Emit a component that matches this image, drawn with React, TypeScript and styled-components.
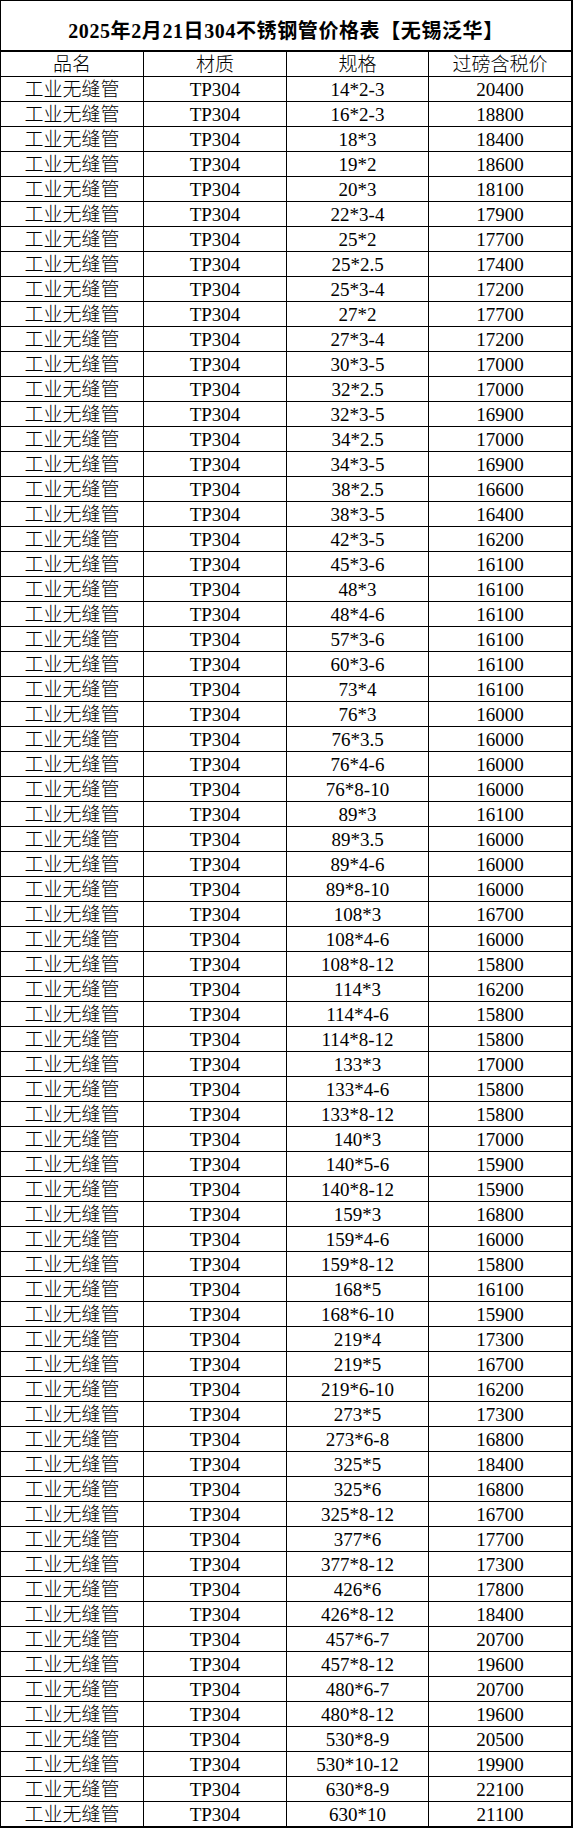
import React from "react";
import styled, { createGlobalStyle } from "styled-components";

const GlobalStyle = createGlobalStyle`
  html, body {
    margin: 0;
    padding: 0;
    background: #ffffff;
  }
  body {
    font-family: "Liberation Serif", "Noto Sans CJK SC", serif;
    color: #000000;
  }
`;

const Sheet = styled.div`
  width: 573px;
  box-sizing: border-box;
  border-top: 1px solid #000;
  border-left: 1px solid #000;
  border-right: 2px solid #000;
  border-bottom: 2px solid #000;
  background: #fff;
  font-family: "Liberation Serif", "Noto Sans CJK SC", serif;
`;

const Title = styled.div`
  height: 51px;
  box-sizing: border-box;
  padding-top: 7px;
  border-bottom: 2px solid #000;
  display: flex;
  align-items: center;
  justify-content: center;
  font-size: 20px;
  font-weight: 700;
  letter-spacing: 0.6px;
  white-space: nowrap;
`;

const Row = styled.div<{ $last?: boolean }>`
  display: grid;
  grid-template-columns: 143px 143px 142px 1fr;
  height: ${(p) => (p.$last ? "24px" : "25px")};
  box-sizing: border-box;
  border-bottom: ${(p) => (p.$last ? "none" : "1px solid #000")};
`;

const Cell = styled.div<{ $end?: boolean }>`
  height: 24px;
  box-sizing: border-box;
  padding-top: 2px;
  display: flex;
  align-items: center;
  justify-content: center;
  border-right: ${(p) => (p.$end ? "none" : "1px solid #000")};
  font-size: 19px;
  font-weight: 300;
  line-height: 22px;
  white-space: nowrap;
  overflow: hidden;
`;

const rows: [string, string][] = [
  ["14*2-3", "20400"],
  ["16*2-3", "18800"],
  ["18*3", "18400"],
  ["19*2", "18600"],
  ["20*3", "18100"],
  ["22*3-4", "17900"],
  ["25*2", "17700"],
  ["25*2.5", "17400"],
  ["25*3-4", "17200"],
  ["27*2", "17700"],
  ["27*3-4", "17200"],
  ["30*3-5", "17000"],
  ["32*2.5", "17000"],
  ["32*3-5", "16900"],
  ["34*2.5", "17000"],
  ["34*3-5", "16900"],
  ["38*2.5", "16600"],
  ["38*3-5", "16400"],
  ["42*3-5", "16200"],
  ["45*3-6", "16100"],
  ["48*3", "16100"],
  ["48*4-6", "16100"],
  ["57*3-6", "16100"],
  ["60*3-6", "16100"],
  ["73*4", "16100"],
  ["76*3", "16000"],
  ["76*3.5", "16000"],
  ["76*4-6", "16000"],
  ["76*8-10", "16000"],
  ["89*3", "16100"],
  ["89*3.5", "16000"],
  ["89*4-6", "16000"],
  ["89*8-10", "16000"],
  ["108*3", "16700"],
  ["108*4-6", "16000"],
  ["108*8-12", "15800"],
  ["114*3", "16200"],
  ["114*4-6", "15800"],
  ["114*8-12", "15800"],
  ["133*3", "17000"],
  ["133*4-6", "15800"],
  ["133*8-12", "15800"],
  ["140*3", "17000"],
  ["140*5-6", "15900"],
  ["140*8-12", "15900"],
  ["159*3", "16800"],
  ["159*4-6", "16000"],
  ["159*8-12", "15800"],
  ["168*5", "16100"],
  ["168*6-10", "15900"],
  ["219*4", "17300"],
  ["219*5", "16700"],
  ["219*6-10", "16200"],
  ["273*5", "17300"],
  ["273*6-8", "16800"],
  ["325*5", "18400"],
  ["325*6", "16800"],
  ["325*8-12", "16700"],
  ["377*6", "17700"],
  ["377*8-12", "17300"],
  ["426*6", "17800"],
  ["426*8-12", "18400"],
  ["457*6-7", "20700"],
  ["457*8-12", "19600"],
  ["480*6-7", "20700"],
  ["480*8-12", "19600"],
  ["530*8-9", "20500"],
  ["530*10-12", "19900"],
  ["630*8-9", "22100"],
  ["630*10", "21100"],
];

export default function App() {
  return (
    <>
      <GlobalStyle />
      <Sheet>
        <Title>2025年2月21日304不锈钢管价格表【无锡泛华】</Title>
        <Row>
          <Cell>品名</Cell>
          <Cell>材质</Cell>
          <Cell>规格</Cell>
          <Cell $end>过磅含税价</Cell>
        </Row>
        {rows.map(([spec, price], i) => (
          <Row key={i} $last={i === rows.length - 1}>
            <Cell>工业无缝管</Cell>
            <Cell>TP304</Cell>
            <Cell>{spec}</Cell>
            <Cell $end>{price}</Cell>
          </Row>
        ))}
      </Sheet>
    </>
  );
}
